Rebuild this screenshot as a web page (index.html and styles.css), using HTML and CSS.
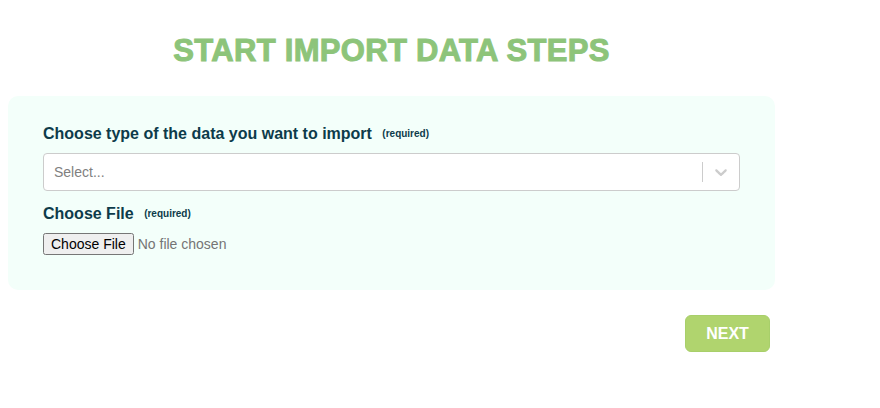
FILE: index.html
```html
<!DOCTYPE html>
<html>
<head>
<meta charset="utf-8">
<link rel="stylesheet" href="styles.css">
</head>
<body>
<div class="wrap">
  <h1 class="title">START IMPORT DATA STEPS</h1>
  <div class="panel">
    <div class="field">
      <label class="label">Choose type of the data you want to import <span class="req">(required)</span></label>
      <div class="select">
        <span class="placeholder">Select...</span>
        <span class="indicators">
          <span class="sep"></span>
          <svg class="chev" width="20" height="20" viewBox="0 0 20 20"><path fill="#cccccc" d="M4.516 7.548c0.436-0.446 1.043-0.481 1.576 0l3.908 3.747 3.908-3.747c0.533-0.481 1.141-0.446 1.574 0 0.436 0.445 0.408 1.197 0 1.615-0.406 0.418-4.695 4.502-4.695 4.502-0.217 0.223-0.502 0.335-0.787 0.335s-0.57-0.112-0.789-0.335c0 0-4.287-4.084-4.695-4.502s-0.436-1.170 0-1.615z"/></svg>
        </span>
      </div>
    </div>
    <div class="field">
      <label class="label">Choose File <span class="req">(required)</span></label>
      <input class="file" type="file">
    </div>
  </div>
  <div class="actions">
    <button class="next">NEXT</button>
  </div>
</div>
</body>
</html>
```
FILE: styles.css
```css
body {
  margin: 8px;
  font-family: "Liberation Sans", Arial, sans-serif;
  background: #ffffff;
}
.wrap {
  width: 767px;
}
.title {
  margin: 0;
  padding-top: 26px;
  height: 61px;
  box-sizing: border-box;
  text-align: center;
  font-size: 31px;
  font-weight: 700;
  line-height: 34px;
  color: #8dc47a;
  -webkit-text-stroke: 1px #8dc47a;
  letter-spacing: 0.3px;
}
.panel {
  margin-top: 27px;
  background: #f3fffa;
  border-radius: 10px;
  padding: 28px 35px 35px 35px;
}
.field {
  display: flex;
  flex-direction: column;
}
.field + .field {
  margin-top: 13px;
}
.label {
  font-size: 16px;
  font-weight: 700;
  color: #0d3b4a;
  line-height: 20px;
  margin-bottom: 9px;
}
.req {
  font-size: 10px;
  margin-left: 6px;
  color: #0d3b4a;
  vertical-align: 2px;
}
.select {
  height: 38px;
  box-sizing: border-box;
  border: 1px solid #cccccc;
  border-radius: 4px;
  background: #ffffff;
  display: flex;
  align-items: center;
  justify-content: space-between;
  padding-left: 10px;
}
.placeholder {
  font-size: 14px;
  color: #808080;
}
.indicators {
  display: flex;
  align-items: center;
  height: 100%;
}
.sep {
  width: 1px;
  height: 20px;
  background: #cccccc;
}
.chev {
  padding: 0 8px;
}
.file {
  font-family: "Liberation Sans", Arial, sans-serif;
  font-size: 14px;
  color: #757575;
  margin: 0;
}
.actions {
  display: flex;
  justify-content: flex-end;
  margin-top: 25px;
  margin-right: 5px;
}
.next {
  width: 85px;
  height: 37px;
  border: 1px solid #a8cf6a;
  border-radius: 6px;
  background: #b0d46e;
  color: #ffffff;
  font-family: "Liberation Sans", Arial, sans-serif;
  font-size: 16px;
  font-weight: 700;
}
```
